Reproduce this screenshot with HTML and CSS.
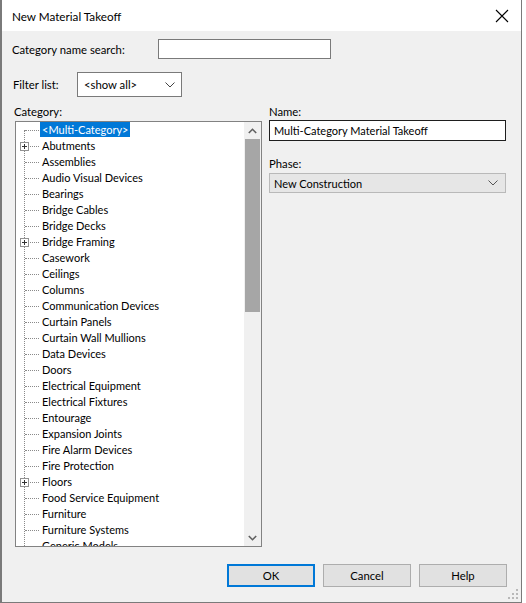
FILE: index.html
```html
<!DOCTYPE html>
<html>
<head>
<meta charset="utf-8">
<link rel="stylesheet" href="styles.css">
</head>
<body>
<div class="window">
  <div class="titlebar">
    <span class="title">New Material Takeoff</span>
    <svg class="close" width="14" height="14" viewBox="0 0 14 14"><path d="M1 1 L13 13 M13 1 L1 13" stroke="#000" stroke-width="1.1" fill="none"/></svg>
  </div>
  <div class="body">
    <div class="row search-row">
      <label class="lbl search-lbl">Category name search:</label>
      <div class="textbox search-box"></div>
    </div>
    <div class="row filter-row">
      <label class="lbl filter-lbl">Filter list:</label>
      <div class="combo filter-combo"><span>&lt;show all&gt;</span>
        <svg class="chev" width="10" height="6" viewBox="0 0 10 6"><path d="M0.5 0.5 L5 5 L9.5 0.5" stroke="#444" stroke-width="1" fill="none"/></svg>
      </div>
    </div>
    <div class="main">
      <div class="left">
        <div class="lbl cat-lbl">Category:</div>
        <div class="tree">
          <div class="tree-items">
            <div class="vline"></div>
            <div class="item"><span class="hl">&lt;Multi-Category&gt;</span></div>
            <div class="item"><span class="plus"></span>Abutments</div>
            <div class="item">Assemblies</div>
            <div class="item">Audio Visual Devices</div>
            <div class="item">Bearings</div>
            <div class="item">Bridge Cables</div>
            <div class="item">Bridge Decks</div>
            <div class="item"><span class="plus"></span>Bridge Framing</div>
            <div class="item">Casework</div>
            <div class="item">Ceilings</div>
            <div class="item">Columns</div>
            <div class="item">Communication Devices</div>
            <div class="item">Curtain Panels</div>
            <div class="item">Curtain Wall Mullions</div>
            <div class="item">Data Devices</div>
            <div class="item">Doors</div>
            <div class="item">Electrical Equipment</div>
            <div class="item">Electrical Fixtures</div>
            <div class="item">Entourage</div>
            <div class="item">Expansion Joints</div>
            <div class="item">Fire Alarm Devices</div>
            <div class="item">Fire Protection</div>
            <div class="item"><span class="plus"></span>Floors</div>
            <div class="item">Food Service Equipment</div>
            <div class="item">Furniture</div>
            <div class="item">Furniture Systems</div>
            <div class="item">Generic Models</div>
          </div>
          <div class="scrollbar">
            <svg class="sarrow" width="9" height="6" viewBox="0 0 9 6"><path d="M0.8 5 L4.5 1.3 L8.2 5" stroke="#606060" stroke-width="1.6" fill="none"/></svg>
            <div class="thumb"></div>
            <div class="track-rest"></div>
            <svg class="sarrow" width="9" height="6" viewBox="0 0 9 6"><path d="M0.8 1 L4.5 4.7 L8.2 1" stroke="#606060" stroke-width="1.6" fill="none"/></svg>
          </div>
        </div>
      </div>
      <div class="right">
        <div class="lbl name-lbl">Name:</div>
        <div class="textbox name-box">Multi-Category Material Takeoff</div>
        <div class="lbl phase-lbl">Phase:</div>
        <div class="combo phase-combo"><span>New Construction</span>
          <svg class="chev" width="10" height="6" viewBox="0 0 10 6"><path d="M0.5 0.5 L5 5 L9.5 0.5" stroke="#555" stroke-width="1" fill="none"/></svg>
        </div>
      </div>
    </div>
    <div class="buttons">
      <div class="btn default">OK</div>
      <div class="btn">Cancel</div>
      <div class="btn">Help</div>
    </div>
    <svg class="grip" width="10" height="10" viewBox="0 0 10 10" fill="#b8b8b8">
      <rect x="8" y="0" width="2" height="2"/><rect x="4" y="4" width="2" height="2"/><rect x="8" y="4" width="2" height="2"/>
      <rect x="0" y="8" width="2" height="2"/><rect x="4" y="8" width="2" height="2"/><rect x="8" y="8" width="2" height="2"/>
    </svg>
  </div>
</div>
</body>
</html>
```

FILE: styles.css
```css
* { box-sizing: border-box; }
html, body { margin: 0; padding: 0; background: #ffffff; }
body {
  font-family: Lato, "Noto Sans", "Liberation Sans", sans-serif;
  font-size: 11px;
  color: #000;
  width: 526px;
  height: 603px;
  overflow: hidden;
}
.window {
  width: 522px;
  height: 603px;
  border-left: 2px solid #7a7a7a;
  border-right: 1px solid #7a7a7a;
  border-bottom: 1px solid #7a7a7a;
  display: flex;
  flex-direction: column;
}
.titlebar {
  height: 31px;
  background: #fff;
  display: flex;
  align-items: center;
  justify-content: space-between;
  padding: 0 12px 0 10px;
  flex: none;
}
.title { font-size: 11.7px; }
.close { display: block; }
.body {
  flex: 1;
  background: #f0f0f0;
  position: relative;
  padding: 8px 0 0 10px;
  height: 571px;
}
.row { display: flex; align-items: center; }
.lbl { line-height: 15px; }
.search-lbl { width: 146px; font-size: 11.3px; }
.textbox {
  background: #fff;
  border: 1px solid #7a7a7a;
  height: 20px;
}
.search-box { width: 173px; }
.filter-row { margin-top: 13px; }
.filter-lbl { width: 65px; padding-left: 1px; font-size: 11.3px; }
.combo {
  display: flex;
  align-items: center;
  justify-content: space-between;
  background: #fff;
  border: 1px solid #7a7a7a;
}
.filter-combo {
  width: 105px;
  height: 25px;
  padding: 0 6px 0 6px;
  font-size: 11.3px;
}
.chev { display: block; }
.main {
  display: flex;
  margin-top: 7px;
}
.left { width: 257px; padding-left: 2px; }
.cat-lbl { height: 17px; font-size: 11.3px; }
.tree {
  width: 247px;
  height: 426px;
  margin-left: 1px;
  background: #fff;
  border: 1px solid #828282;
  display: flex;
  overflow: hidden;
}
.tree-items {
  flex: 1;
  position: relative;
  overflow: hidden;
}
.vline {
  position: absolute;
  left: 8px;
  top: 8px;
  bottom: 0;
  border-left: 1px dotted #8a8a8a;
}
.item {
  height: 16px;
  line-height: 16px;
  padding-left: 26px;
  position: relative;
  white-space: nowrap;
}
.item::before {
  content: "";
  position: absolute;
  left: 9px;
  top: 8px;
  width: 14px;
  border-top: 1px dotted #8a8a8a;
}
.hl {
  display: inline-block;
  background: #0078d7;
  color: #fff;
  padding: 0 2px;
  margin-left: -2px;
  line-height: 15px;
  height: 15px;
}
.plus {
  position: absolute;
  left: 4px;
  top: 4px;
  width: 9px;
  height: 9px;
  border: 1px solid #919191;
  background: #fff;
  z-index: 1;
}
.plus::before {
  content: "";
  position: absolute;
  left: 1px; top: 3px;
  width: 5px; height: 1px;
  background: #333;
}
.plus::after {
  content: "";
  position: absolute;
  left: 3px; top: 1px;
  width: 1px; height: 5px;
  background: #333;
}
.scrollbar {
  width: 17px;
  flex: none;
  background: #f0f0f0;
  display: flex;
  flex-direction: column;
  align-items: center;
}
.sarrow { display: block; margin: 6px 0 5px; flex: none; }
.thumb {
  width: 15px;
  height: 173px;
  background: #a6a6a6;
  flex: none;
}
.track-rest { flex: 1; }
.right { width: 239px; }
.name-lbl { height: 16px; font-size: 11.3px; }
.name-box {
  width: 237px;
  height: 21px;
  border: 1px solid #1e1e1e;
  padding: 0 4px;
  line-height: 19px;
}
.phase-lbl { margin-top: 15px; height: 17px; font-size: 11.3px; }
.phase-combo {
  width: 237px;
  height: 20px;
  background: #e6e6e6;
  border: 1px solid #b9b9b9;
  padding: 0 7px 0 4px;
}
.buttons {
  display: flex;
  gap: 8px;
  margin-top: 17px;
  margin-left: 215px;
}
.btn {
  width: 88px;
  height: 23px;
  background: #e1e1e1;
  border: 1px solid #adadad;
  display: flex;
  align-items: center;
  justify-content: center;
  font-size: 11.3px;
}
.btn.default { border: 2px solid #0078d7; }
.grip { position: absolute; right: 3px; bottom: 3px; }
```
